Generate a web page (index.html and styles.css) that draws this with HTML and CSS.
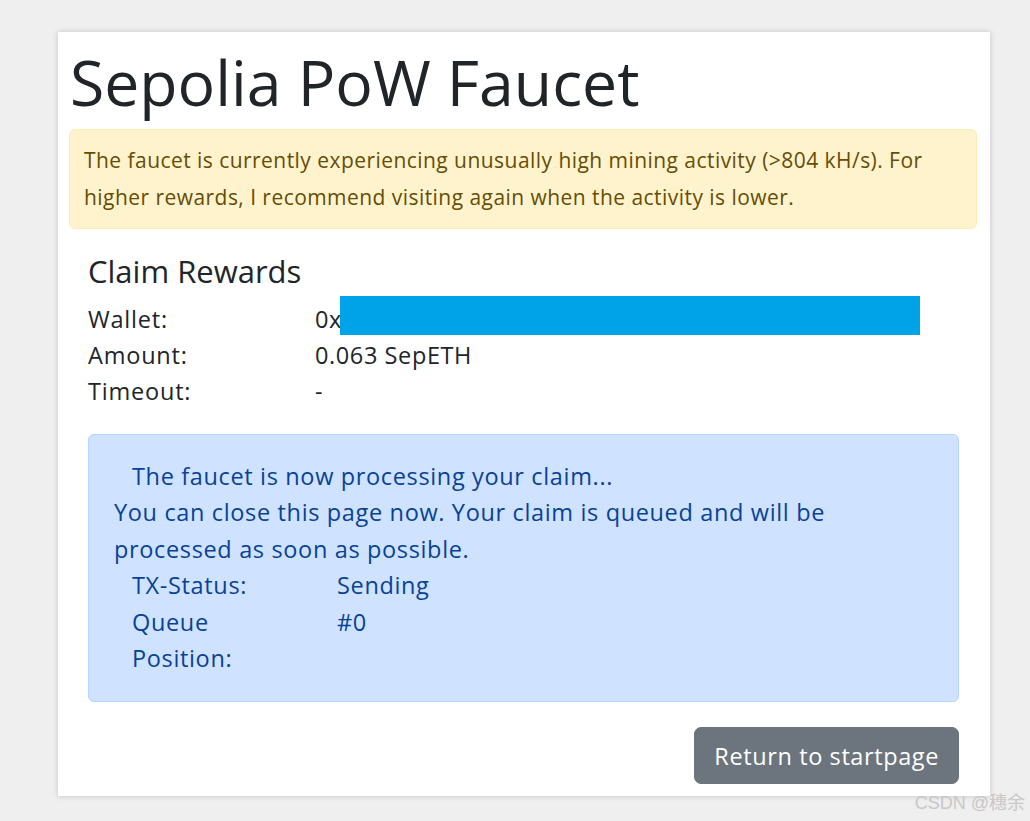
FILE: index.html
```html
<!DOCTYPE html>
<html>
<head>
<meta charset="utf-8">
<link rel="stylesheet" href="styles.css">
</head>
<body>
<div class="card">
  <h1 class="title">Sepolia PoW Faucet</h1>
  <div class="alert-warn">The faucet is currently experiencing unusually high mining activity (&gt;804 kH/s). For higher rewards, I recommend visiting again when the activity is lower.</div>
  <div class="claim">
    <h2 class="claim-title">Claim Rewards</h2>
    <div class="row"><div class="label">Wallet:</div><div class="value">0x<span class="mask"></span></div></div>
    <div class="row"><div class="label">Amount:</div><div class="value">0.063 SepETH</div></div>
    <div class="row"><div class="label">Timeout:</div><div class="value">-</div></div>
    <div class="alert-info">
      <div class="info-first">The faucet is now processing your claim...</div>
      <div>You can close this page now. Your claim is queued and will be processed as soon as possible.</div>
      <div class="irow"><div class="ilabel">TX-Status:</div><div class="ivalue">Sending</div></div>
      <div class="irow"><div class="ilabel">Queue Position:</div><div class="ivalue">#0</div></div>
    </div>
    <div class="actions"><button class="btn">Return to startpage</button></div>
  </div>
</div>
<div class="watermark">CSDN @穗余</div>
</body>
</html>
```
FILE: styles.css
```css
html, body {
  margin: 0;
  padding: 0;
  background: #efefef;
  font-family: "Open Sans", "Noto Sans", "Noto Sans CJK SC", sans-serif;
}
body {
  height: 821px;
  position: relative;
  overflow: hidden;
}
.card {
  margin: 32px 0 0 58px;
  width: 932px;
  height: 764px;
  box-sizing: border-box;
  background: #fff;
  box-shadow: 0 0 6px rgba(0,0,0,0.18);
  padding: 7px 13px 0 11px;
}
.title {
  margin: 0 0 0 1px;
  font-weight: 400;
  font-size: 62.5px;
  line-height: 86px;
  color: #212529;
}
.alert-warn {
  margin-top: 4px;
  background: #fff3cd;
  border: 1px solid #ffecb5;
  border-radius: 6px;
  color: #664d03;
  font-size: 21px;
  letter-spacing: 0.45px;
  line-height: 37px;
  padding: 12px 14px 12px 14px;
}
.claim {
  padding: 23px 18px 0 19px;
}
.claim-title {
  margin: 0 0 11px 0;
  font-weight: 400;
  font-size: 31px;
  line-height: 38px;
  color: #212529;
}
.row {
  display: flex;
  font-size: 23.5px;
  letter-spacing: 0.8px;
  line-height: 36px;
  color: #212529;
}
.label { width: 227px; flex-shrink: 0; }
.value { display: flex; align-items: center; letter-spacing: 0.6px; }
.mask {
  display: inline-block;
  width: 580px;
  height: 39px;
  background: #00a3e8;
  margin: -8px 0 0 -2px;
}
.alert-info {
  margin-top: 25px;
  background: #cfe2ff;
  border: 1px solid #b6d4fe;
  border-radius: 6px;
  color: #084298;
  font-size: 23.5px;
  letter-spacing: 0.65px;
  line-height: 36.4px;
  padding: 23px 40px 23px 25px;
  height: 268px;
  box-sizing: border-box;
}
.info-first { padding-left: 18px; }
.irow { display: flex; padding-left: 18px; }
.ilabel { width: 125px; margin-right: 80px; flex-shrink: 0; }
.actions {
  display: flex;
  justify-content: flex-end;
  margin-top: 25px;
}
.btn {
  background: #6c757d;
  border: 1px solid #6c757d;
  color: #fff;
  border-radius: 7px;
  font-family: inherit;
  font-size: 23.5px;
  letter-spacing: 0.6px;
  height: 57px;
  padding: 0 19px;
}
.watermark {
  position: absolute;
  right: 5px;
  bottom: 7px;
  font-size: 18px;
  color: #c8c8c8;
  font-family: "Liberation Sans", "Noto Sans CJK SC", sans-serif;
}
```
